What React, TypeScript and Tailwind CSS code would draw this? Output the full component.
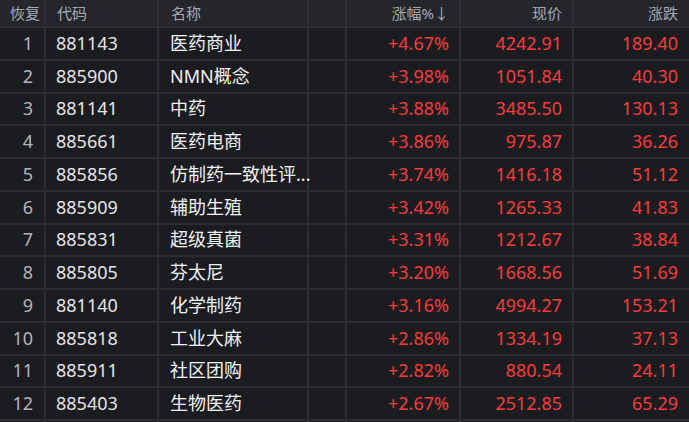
import React from "react";

interface Row {
  code: string;
  name: string;
  pct: string;
  price: string;
  change: string;
}

const ROWS: Row[] = [
  { code: "881143", name: "医药商业", pct: "+4.67%", price: "4242.91", change: "189.40" },
  { code: "885900", name: "NMN概念", pct: "+3.98%", price: "1051.84", change: "40.30" },
  { code: "881141", name: "中药", pct: "+3.88%", price: "3485.50", change: "130.13" },
  { code: "885661", name: "医药电商", pct: "+3.86%", price: "975.87", change: "36.26" },
  { code: "885856", name: "仿制药一致性评...", pct: "+3.74%", price: "1416.18", change: "51.12" },
  { code: "885909", name: "辅助生殖", pct: "+3.42%", price: "1265.33", change: "41.83" },
  { code: "885831", name: "超级真菌", pct: "+3.31%", price: "1212.67", change: "38.84" },
  { code: "885805", name: "芬太尼", pct: "+3.20%", price: "1668.56", change: "51.69" },
  { code: "881140", name: "化学制药", pct: "+3.16%", price: "4994.27", change: "153.21" },
  { code: "885818", name: "工业大麻", pct: "+2.86%", price: "1334.19", change: "37.13" },
  { code: "885911", name: "社区团购", pct: "+2.82%", price: "880.54", change: "24.11" },
  { code: "885403", name: "生物医药", pct: "+2.67%", price: "2512.85", change: "65.29" },
];

const cell = "h-full flex items-center border-r-2 border-[#2c2d32]";

export default function App() {
  return (
    <div
      className="w-[689px] h-[422px] overflow-hidden bg-[#1b1c20]"
      style={{ fontFamily: '"Noto Sans", "Noto Sans CJK SC", sans-serif' }}
    >
      {/* Header */}
      <div className="flex h-[28px] bg-[#25262b] border-b-2 border-[#2c2d32] text-[15px] text-[#a3aab4]">
        <div className={cell + " w-[46px] justify-end pr-[4px]"}>恢复</div>
        <div className={cell + " w-[113px] pl-[11px]"}>代码</div>
        <div className={cell + " w-[150px] pl-[12px]"}>名称</div>
        <div className={cell + " w-[38px]"} />
        <div className={cell + " w-[114px] justify-end pr-[10px]"}>涨幅%↓</div>
        <div className={cell + " w-[113px] justify-end pr-[10px]"}>现价</div>
        <div className="h-full flex items-center flex-1 justify-end pr-[11px]">涨跌</div>
      </div>

      {/* Rows */}
      {ROWS.map((r, i) => (
        <div key={r.code} className="flex h-[32.75px] border-b-2 border-[#2c2d32] text-[18px]">
          <div className={cell + " w-[46px] justify-end pr-[11px] text-[#b4b5b8]"}>{i + 1}</div>
          <div className={cell + " w-[113px] pl-[10px] text-[#e4e4e6]"}>{r.code}</div>
          <div className={cell + " w-[150px] pl-[11px] text-[#f2f2f4] whitespace-nowrap"}>{r.name}</div>
          <div className={cell + " w-[38px]"} />
          <div className={cell + " w-[114px] justify-end pr-[10px] text-[#f63c3c]"}>{r.pct}</div>
          <div className={cell + " w-[113px] justify-end pr-[10px] text-[#f63c3c]"}>{r.price}</div>
          <div className="h-full flex items-center flex-1 justify-end pr-[11px] text-[#f63c3c]">{r.change}</div>
        </div>
      ))}
      <div className="flex h-[10px]">
        <div className={cell + " w-[46px]"} />
        <div className={cell + " w-[113px]"} />
        <div className={cell + " w-[150px]"} />
        <div className={cell + " w-[38px]"} />
        <div className={cell + " w-[114px]"} />
        <div className={cell + " w-[113px]"} />
      </div>
    </div>
  );
}
